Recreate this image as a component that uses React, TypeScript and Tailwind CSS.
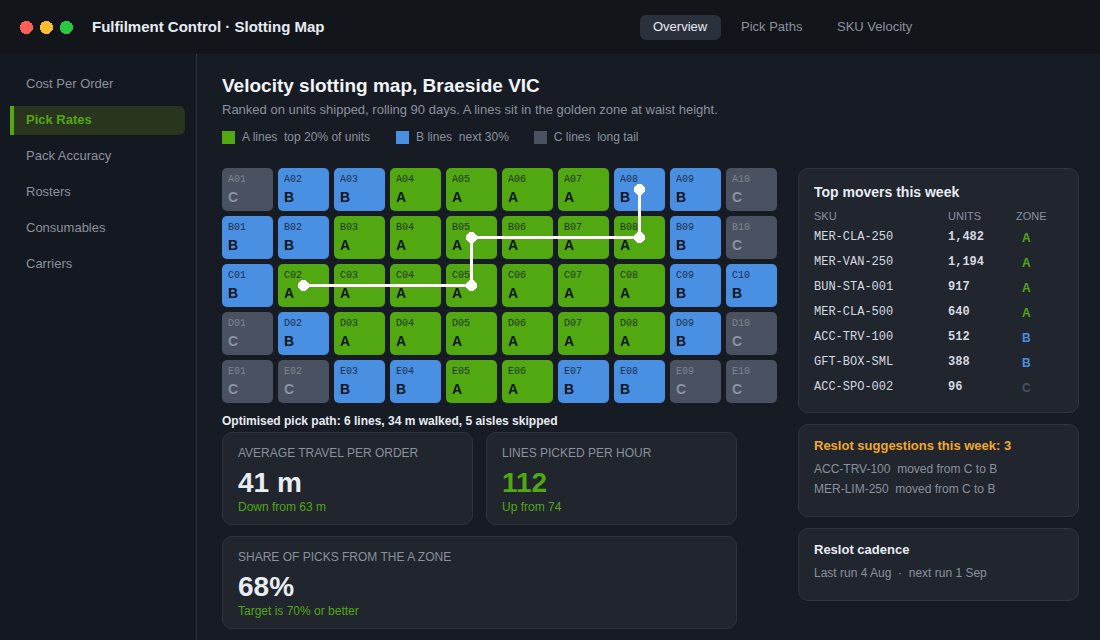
const sidebar = ['Cost Per Order', 'Pick Rates', 'Pack Accuracy', 'Rosters', 'Consumables', 'Carriers'];
const rows: [string, string][] = [
  ['A', 'CBBAAAABBC'],
  ['B', 'BBAAAAAABC'],
  ['C', 'BAAAAAAABB'],
  ['D', 'CBAAAAAABC'],
  ['E', 'CCBBAABBCC'],
];
const movers: [string, string, string][] = [
  ['MER-CLA-250', '1,482', 'A'],
  ['MER-VAN-250', '1,194', 'A'],
  ['BUN-STA-001', '917', 'A'],
  ['MER-CLA-500', '640', 'A'],
  ['ACC-TRV-100', '512', 'B'],
  ['GFT-BOX-SML', '388', 'B'],
  ['ACC-SPO-002', '96', 'C'],
];
const cellStyle: Record<string, string> = {
  A: 'bg-[#52a811] text-[#12151c]',
  B: 'bg-[#4a90e2] text-[#12151c]',
  C: 'bg-[#4a5160] text-[#8b919d]',
};
const zoneStyle: Record<string, string> = {
  A: 'text-[#52a811]',
  B: 'text-[#4a90e2]',
  C: 'text-[#4a5160]',
};
const points: [number, number][] = [[81.5, 117.5], [249.5, 117.5], [249.5, 69.5], [417.5, 69.5], [417.5, 21.5]];

function Stat({ label, value, note, green, className }: { label: string; value: string; note: string; green?: boolean; className?: string }) {
  return (
    <div className={`h-[93px] rounded-[10px] border border-[#2f3540] bg-[#20252e] px-[15px] pt-[12px] ${className ?? ''}`}>
      <div className="text-[12px] leading-[16px] text-[#8b919d]">{label}</div>
      <div className={`mt-[6px] text-[28px] font-bold leading-[32px] ${green ? 'text-[#52a811]' : 'text-[#e8ecf3]'}`}>{value}</div>
      <div className="text-[12px] leading-[16px] text-[#52a811]">{note}</div>
    </div>
  );
}

export default function App() {
  return (
    <div className="flex h-[640px] w-[1100px] flex-col overflow-hidden bg-[#171b24] font-['Liberation_Sans',sans-serif] [text-rendering:optimizeSpeed]">
      <header className="flex h-[54px] shrink-0 items-center bg-[#12151a] pl-[20px]">
        <svg width="53" height="13" viewBox="0 0 53 13" shapeRendering="crispEdges">
          <circle cx="6.5" cy="6.5" r="6.5" fill="#ff5f57" />
          <circle cx="26.5" cy="6.5" r="6.5" fill="#febc2e" />
          <circle cx="46.5" cy="6.5" r="6.5" fill="#28c840" />
        </svg>
        <div className="ml-[19px] w-[232px] whitespace-nowrap text-[15px] font-bold text-[#e8ecf3]">Fulfilment Control · Slotting Map</div>
        <nav className="ml-[316px] flex gap-[7px] text-[13px]">
          <span className="flex h-[25px] w-[81px] items-center rounded-[6px] bg-[#2a313c] px-[13px] text-[#e8ecf3]">Overview</span>
          <span className="flex h-[25px] w-[89px] items-center px-[13px] text-[#8b919d]">Pick Paths</span>
          <span className="flex h-[25px] items-center px-[13px] text-[#8b919d]">SKU Velocity</span>
        </nav>
      </header>
      <div className="flex min-h-0 flex-1">
        <aside className="w-[197px] shrink-0 border-r border-[#2f3540] bg-[#141821] pt-[16px]">
          <div className="flex flex-col gap-[7px]">
            {sidebar.map((s) =>
              s === 'Pick Rates' ? (
                <div key={s} className="ml-[10px] flex h-[29px] w-[175px] items-center rounded-r-[6px] border-l-4 border-[#52a811] bg-[#2a3520] pb-[2px] pl-[12px] text-[13px] font-bold text-[#52a811]">{s}</div>
              ) : (
                <div key={s} className="ml-[26px] flex h-[29px] items-center pb-[2px] text-[13px] text-[#8b919d]">{s}</div>
              ),
            )}
          </div>
        </aside>
        <main className="min-w-0 flex-1 pl-[25px] pt-[20px]">
          <h1 className="text-[19px] font-bold leading-[24px] text-[#f1f4f8]">Velocity slotting map, Braeside VIC</h1>
          <p className="mt-[2px] text-[13px] leading-[20px] text-[#8b919d]">Ranked on units shipped, rolling 90 days. A lines sit in the golden zone at waist height.</p>
          <div className="mt-[10px] flex text-[12px] leading-[14px] text-[#8b919d]">
            <div className="flex items-start gap-[7px]"><span className="mt-[1px] h-[13px] w-[13px] bg-[#52a811]" /><span className="whitespace-pre">A lines  top 20% of units</span></div>
            <div className="ml-[26px] flex items-start gap-[7px]"><span className="mt-[1px] h-[13px] w-[13px] bg-[#4a90e2]" /><span className="whitespace-pre">B lines  next 30%</span></div>
            <div className="ml-[25px] flex items-start gap-[7px]"><span className="mt-[1px] h-[13px] w-[13px] bg-[#4a5160]" /><span className="whitespace-pre">C lines  long tail</span></div>
          </div>
          <div className="mt-[24px] flex gap-[21px]">
            <div className="w-[555px] shrink-0">
              <div className="relative grid grid-cols-[repeat(10,51px)] gap-[5px]">
                {rows.flatMap(([r, zones]) =>
                  zones.split('').map((z, i) => {
                    const id = `${r}${String(i + 1).padStart(2, '0')}`;
                    return (
                      <div key={id} className={`h-[43px] rounded-[5px] px-[6px] pt-[6px] ${cellStyle[z]}`}>
                        <div className="font-['Liberation_Mono',monospace] text-[10px] leading-[12px] opacity-80">{id}</div>
                        <div className="mt-[2px] text-[14px] font-bold leading-[18px]">{z}</div>
                      </div>
                    );
                  }),
                )}
                <svg className="pointer-events-none absolute left-0 top-0" width="555" height="235" fill="none" shapeRendering="crispEdges">
                  <polyline points={points.map((p) => p.join(',')).join(' ')} stroke="#ffffff" strokeWidth="3" />
                  {points.map(([x, y]) => (
                    <circle key={`${x}-${y}`} cx={x} cy={y} r="5.5" fill="#ffffff" />
                  ))}
                </svg>
              </div>
              <div className="mt-[10px] text-[12px] font-bold leading-[16px] text-[#e8ecf3]">Optimised pick path: 6 lines, 34 m walked, 5 aisles skipped</div>
              <div className="mt-[3px] grid w-[515px] grid-cols-[251px_251px] gap-x-[13px] gap-y-[11px]">
                <Stat label="AVERAGE TRAVEL PER ORDER" value="41 m" note="Down from 63 m" />
                <Stat label="LINES PICKED PER HOUR" value="112" note="Up from 74" green />
                <Stat label="SHARE OF PICKS FROM THE A ZONE" value="68%" note="Target is 70% or better" className="col-span-2" />
              </div>
            </div>
            <div className="flex w-[281px] shrink-0 flex-col gap-[11px]">
              <section className="h-[245px] rounded-[10px] border border-[#2f3540] bg-[#20252e] px-[15px] pt-[14px]">
                <h2 className="text-[14px] font-bold leading-[18px] text-[#e8ecf3]">Top movers this week</h2>
                <div className="mt-[6px] grid grid-cols-[134px_68px_1fr] text-[11px] leading-[18px] text-[#8b919d]">
                  <span>SKU</span><span>UNITS</span><span>ZONE</span>
                </div>
                {movers.map(([sku, units, z]) => (
                  <div key={sku} className="grid h-[25px] grid-cols-[134px_68px_1fr] items-center text-[12px]">
                    <span className="pb-[2px] font-['Liberation_Mono',monospace] text-[#d5d9e0]">{sku}</span>
                    <span className="pb-[2px] font-['Liberation_Mono',monospace] font-bold text-[#d5d9e0]">{units}</span>
                    <span className={`pl-[6px] font-bold ${zoneStyle[z]}`}>{z}</span>
                  </div>
                ))}
              </section>
              <section className="h-[93px] rounded-[10px] border border-[#2f3540] bg-[#20252e] px-[15px] pt-[12px]">
                <h2 className="text-[13px] font-bold leading-[18px] text-[#f0a92e]">Reslot suggestions this week: 3</h2>
                <div className="mt-[4px] whitespace-pre text-[12px] leading-[20px] text-[#8b919d]">{'ACC-TRV-100  moved from C to B\nMER-LIM-250  moved from C to B'}</div>
              </section>
              <section className="h-[73px] rounded-[10px] border border-[#2f3540] bg-[#20252e] px-[15px] pt-[12px]">
                <h2 className="text-[13px] font-bold leading-[18px] text-[#e8ecf3]">Reslot cadence</h2>
                <div className="mt-[4px] whitespace-pre text-[12px] leading-[20px] text-[#8b919d]">{'Last run 4 Aug  ·  next run 1 Sep'}</div>
              </section>
            </div>
          </div>
        </main>
      </div>
    </div>
  );
}
